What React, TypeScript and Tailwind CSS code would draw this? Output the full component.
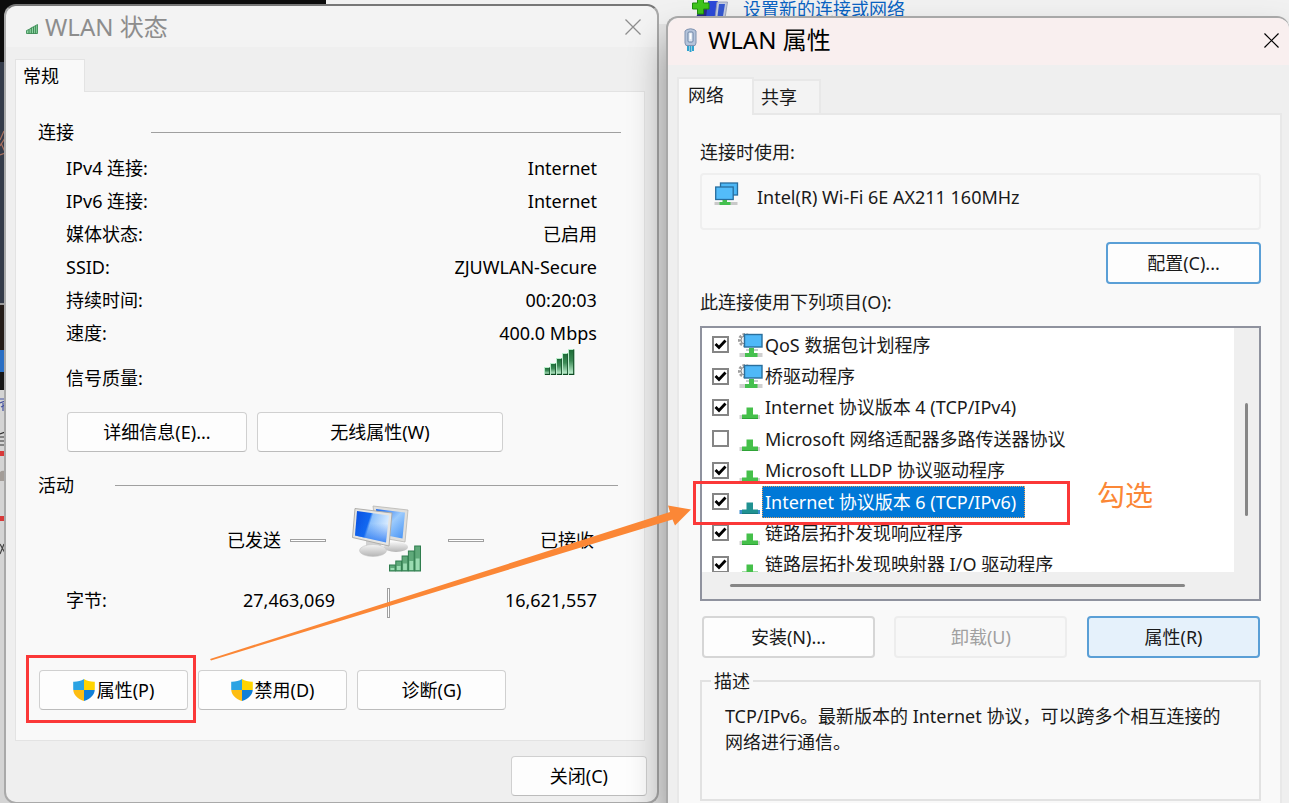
import React from "react";

function CloseIcon({ className }: { className: string }) {
  return (
    <svg viewBox="0 0 16 16" className={className} fill="none" stroke="currentColor" strokeWidth="1.3" aria-hidden="true">
      <path d="M0.5 0.5 L15.5 15.5 M15.5 0.5 L0.5 15.5" />
    </svg>
  );
}

function SignalBars({ className }: { className: string }) {
  const bars = [
    { x: 0.5, h: 7 },
    { x: 6.5, h: 11 },
    { x: 12.5, h: 16 },
    { x: 18.5, h: 21 },
    { x: 24.5, h: 25 },
  ];
  return (
    <svg viewBox="0 0 31 26" className={className} aria-hidden="true">
      <defs>
        <linearGradient id="barFill" x1="0" y1="0" x2="0" y2="1">
          <stop offset="0" stopColor="#1c6b36" />
          <stop offset="0.45" stopColor="#3b8a55" />
          <stop offset="1" stopColor="#c9f7d9" />
        </linearGradient>
      </defs>
      {bars.map((b) => (
        <g key={b.x}>
          <rect x={b.x} y={25.5 - b.h} width="5.4" height={b.h} fill="url(#barFill)" stroke="#b9ecca" strokeWidth="1" />
          <path d={`M${b.x + 5.2} ${25.5 - b.h} V25.4 H${b.x + 0.5}`} fill="none" stroke="#0d4a22" strokeWidth="1.1" />
        </g>
      ))}
    </svg>
  );
}

function TinySignal() {
  return (
    <svg viewBox="0 0 12 10" className="h-[10px] w-3" aria-hidden="true">
      <path d="M0.5 9.5 V6.5 L3 5.5 L5 4 L8 2.5 L11.5 0.5 V9.5 Z" fill="#8fd6a4" stroke="#3e8d57" strokeWidth="0.9" />
      <path d="M3 5.5 V9.5 M5.3 4 V9.5 M7.6 3 V9.5 M9.7 1.8 V9.5" stroke="#2c7a45" strokeWidth="0.9" />
    </svg>
  );
}

function ShieldIcon() {
  return (
    <svg viewBox="0 0 22 22" className="h-[22px] w-[22px]" aria-hidden="true">
      <defs>
        <clipPath id="shieldShape">
          <path d="M11 0 C8.2 1.8 4 3 0.2 2.8 V10 C0.2 16 5 20 11 22 C17 20 21.8 16 21.8 10 V2.8 C18 3 13.8 1.8 11 0 Z" />
        </clipPath>
      </defs>
      <g clipPath="url(#shieldShape)">
        <rect width="11" height="11" fill="#2ba3e3" />
        <rect x="11" width="11" height="11" fill="#ffd400" />
        <rect y="11" width="11" height="11" fill="#fdbd12" />
        <rect x="11" y="11" width="11" height="11" fill="#0f7fd8" />
      </g>
    </svg>
  );
}

function TwinMonitors() {
  return (
    <svg viewBox="0 0 70 68" className="h-[68px] w-[70px]" aria-hidden="true">
      <defs>
        <linearGradient id="screenA" x1="0" y1="0" x2="1" y2="0.3">
          <stop offset="0" stopColor="#0a4fe0" />
          <stop offset="0.45" stopColor="#1268f0" />
          <stop offset="0.52" stopColor="#8cc0fb" />
          <stop offset="1" stopColor="#d8ebff" />
        </linearGradient>
        <linearGradient id="screenDepth" x1="0" y1="0" x2="0" y2="1">
          <stop offset="0.4" stopColor="#1268f0" stopOpacity="0" />
          <stop offset="1" stopColor="#1268f0" stopOpacity="0.75" />
        </linearGradient>
        <linearGradient id="screenB" x1="0" y1="0" x2="1" y2="1">
          <stop offset="0" stopColor="#1464ee" />
          <stop offset="0.5" stopColor="#9dcbfc" />
          <stop offset="1" stopColor="#4391f5" />
        </linearGradient>
        <linearGradient id="stand" x1="0" y1="0" x2="0" y2="1">
          <stop offset="0" stopColor="#f4f4f4" />
          <stop offset="1" stopColor="#b5b5b5" />
        </linearGradient>
      </defs>
      <ellipse cx="44" cy="43" rx="12" ry="5" fill="url(#stand)" />
      <path d="M21 2 L56 6 L53 38 L25 33 Z" fill="#e0dfdc" stroke="#b7b6b3" strokeWidth="0.8" />
      <path d="M24 5 L53 8.500 L50.500 34.500 L27 30 Z" fill="url(#screenB)" />
      <path d="M14 36 L29 38 L29 46 L14 46 Z" fill="#d2d2d2" />
      <ellipse cx="21" cy="46.500" rx="13.500" ry="6" fill="url(#stand)" stroke="#c6c6c6" strokeWidth="0.6" />
      <path d="M3 4.500 L40 9 L37 42 L0.500 33.500 Z" fill="#e6e5e2" stroke="#a9a8a5" strokeWidth="0.9" />
      <path d="M5 7 L37 11.500 L34 38.500 L3 31.500 Z" fill="url(#screenA)" />
      <path d="M5 7 L37 11.500 L34 38.500 L3 31.500 Z" fill="url(#screenDepth)" />
      <g transform="translate(37 41)">
        {[
          { x: 0.5, h: 6 },
          { x: 6.8, h: 10 },
          { x: 13.1, h: 15 },
          { x: 19.4, h: 20 },
          { x: 25.7, h: 25 },
        ].map((b) => (
          <g key={b.x}>
            <rect x={b.x} y={26 - b.h} width="5.800" height={b.h} fill="#5fa97a" stroke="#2f7d4e" strokeWidth="1" />
            <rect x={b.x + 1} y={26 - b.h / 2} width="3.800" height={b.h / 2 - 1} fill="#9bdcb2" />
          </g>
        ))}
      </g>
    </svg>
  );
}

function AdapterIcon() {
  return (
    <svg viewBox="0 0 13 25" className="h-[25px] w-[13px]" aria-hidden="true">
      <path d="M4 16 V23 M6.500 16 V24 M9 16 V23" stroke="#2fa3cf" strokeWidth="2" />
      <path d="M3 1.500 Q6.500 0 10 1.500 L12 3 V15 L11 17.500 H2 L1 15 V3 Z" fill="#b4c3da" stroke="#7f92b0" strokeWidth="1" />
      <rect x="4" y="4" width="5" height="10" rx="1" fill="#dfe7f2" stroke="#6c84a6" strokeWidth="1" />
      <path d="M6.500 5.500 V11" stroke="#ffffff" strokeWidth="1.500" />
    </svg>
  );
}

function NetworkDevice() {
  return (
    <svg viewBox="0 0 25 24" className="h-6 w-[25px]" aria-hidden="true">
      <rect x="6.500" y="1" width="17" height="12" fill="#4db7f5" stroke="#276d9e" strokeWidth="1.300" />
      <rect x="1.700" y="5" width="17.500" height="12.500" fill="#53bcfa" stroke="#276d9e" strokeWidth="1.300" />
      <rect x="0.5" y="20" width="23" height="3" fill="#c9c9c9" />
      <path d="M8.500 18 H13 V20 H16.500 V23 H5.500 V20 H8.500 Z" fill="#44c04f" />
    </svg>
  );
}

function ServiceIcon() {
  return (
    <svg viewBox="0 0 25 26" className="h-[26px] w-[25px]" aria-hidden="true">
      <circle cx="7" cy="8" r="5.500" fill="none" stroke="#9b9b9b" strokeWidth="3" strokeDasharray="2.400 1.400" />
      <circle cx="7" cy="8" r="4" fill="#f4f4f4" stroke="#8d8d8d" strokeWidth="1" />
      <rect x="6.500" y="2.500" width="17.500" height="12.500" fill="#4fb8f8" stroke="#2a6f9d" strokeWidth="1.400" />
      <path d="M8 18 H20" stroke="#8f9aa0" strokeWidth="1" />
      <rect x="1.500" y="21" width="23" height="4" fill="#cfcfcf" />
      <path d="M11 16 H16 V21 H19.500 V25 H7 V21 H11 Z" fill="#45c04f" />
    </svg>
  );
}

function ProtocolIcon({ selected }: { selected?: boolean }) {
  return (
    <svg viewBox="0 0 25 26" className="h-[26px] w-[25px]" aria-hidden="true">
      <rect x="1.500" y="21" width="20.500" height="4" fill={selected ? "#3f8fd0" : "#d2d2d2"} />
      <path d="M8.500 13.500 H15 V20.500 H20 V25 H4 V20.500 H8.500 Z" fill={selected ? "#219291" : "#45c04a"} />
      <path d="M4 24.500 H20" stroke={selected ? "#187a80" : "#2fa337"} strokeWidth="1" />
    </svg>
  );
}

function WizardIcon() {
  return (
    <svg viewBox="0 0 36 18" className="h-[18px] w-9" aria-hidden="true">
      <path d="M6 12 L22 1 L22 18 H4 Z" fill="#2a2a8a" />
      <path d="M16 1 H26 L24 18 H14 Z" fill="#2c49d8" />
      <path d="M25 2 H35.500 L33 18 H23 Z" fill="#c3cbe0" stroke="#9098b0" strokeWidth="0.8" />
      <path d="M27 4 H33 L31 16 H25.500 Z" fill="#3658cf" />
      <path d="M5.500 -2 H11.500 V3 H17 V9 H11.500 V14 H5.500 V9 H0.5 V3 H5.500 Z" fill="#3fc51b" stroke="#1f8f0c" strokeWidth="1" />
    </svg>
  );
}

const buttonBase = "flex items-center justify-center rounded border text-lg leading-6";
const plainButton = `${buttonBase} h-10 border-[#d0d0d0] border-b-[#bcbcbc] bg-[#fdfdfd]`;

const statusRows = [
  ["IPv4 连接:", "Internet"],
  ["IPv6 连接:", "Internet"],
  ["媒体状态:", "已启用"],
  ["SSID:", "ZJUWLAN-Secure"],
  ["持续时间:", "00:20:03"],
  ["速度:", "400.0 Mbps"],
];

function SectionTitle({ title, gap, end }: { title: string; gap: string; end: string }) {
  return (
    <div className={`flex h-6 items-center pl-[22px] ${gap} ${end}`}>
      <h2 className="text-lg leading-6">{title}</h2>
      <div className="h-px flex-1 bg-[#a0a0a0]" />
    </div>
  );
}

function StatusWindow() {
  return (
    <section aria-label="WLAN 状态" className="mt-1 flex min-w-0 flex-[654] flex-col rounded-xl border-2 border-[#a9a9a9] border-t-[#777777] bg-[#efefef] text-black">
      <header className="flex h-[41px] items-center rounded-t-xl bg-[#f3f3f3] pr-4 pl-5 text-[#8d8d8d]">
        <div className="pt-1">
          <TinySignal />
        </div>
        <h1 className="flex-1 pl-[7px] text-2xl leading-8">WLAN 状态</h1>
        <button type="button" aria-label="关闭">
          <CloseIcon className="h-4 w-4" />
        </button>
      </header>

      <div className="flex flex-1 flex-col pt-3 pr-3 pb-1.5 pl-[9px]">
        <div role="tablist" className="flex">
          <button type="button" role="tab" aria-selected="true" className="relative z-10 -mb-px h-[33px] w-[70px] border border-b-0 border-[#e3e3e3] bg-[#f9f9f9] pl-[7px] text-left text-lg leading-6">
            常规
          </button>
        </div>
        <div role="tabpanel" className="border border-[#e3e3e3] bg-[#f9f9f9] pt-7 pb-[30px]">
          <SectionTitle title="连接" gap="gap-[77px]" end="pr-[23px]" />
          <dl className="pt-[7px] pr-[47px] pl-[50px] text-lg">
            {statusRows.map(([label, value]) => (
              <div key={label} className="flex h-[33px] items-center justify-between leading-6">
                <dt>{label}</dt>
                <dd>{value}</dd>
              </div>
            ))}
            <div className="flex h-[63px] items-start justify-between leading-6">
              <dt className="pt-[17px]">信号质量:</dt>
              <dd className="pr-[22px]">
                <SignalBars className="h-[26px] w-[31px]" />
              </dd>
            </div>
          </dl>
          <div className="flex gap-[10px] pl-[51px]">
            <button type="button" className={`${plainButton} w-[180px]`}>详细信息(E)...</button>
            <button type="button" className={`${plainButton} w-[246px]`}>无线属性(W)</button>
          </div>

          <div className="pt-[21px]">
            <SectionTitle title="活动" gap="gap-[41px]" end="pr-[26px]" />
          </div>
          <div className="grid grid-cols-[161px_108px_107px_1fr] pt-[7px] pr-[47px] pl-[50px] text-lg leading-6">
            <div className="col-start-2 flex h-[68px] items-center gap-[9px] pt-1">
              <span className="whitespace-nowrap">已发送</span>
              <span className="h-[3px] w-9 border border-[#a0a0a0] bg-white" />
            </div>
            <div className="flex h-[68px] items-center pl-[17px]">
              <TwinMonitors />
            </div>
            <div className="flex h-[68px] items-center justify-between pt-1 pr-[3px] pl-1.5">
              <span className="h-[3px] w-9 border border-[#a0a0a0] bg-white" />
              <span>已接收</span>
            </div>
          </div>
          <div className="grid grid-cols-[161px_108px_107px_1fr] pt-4 pr-[47px] pl-[50px] text-lg leading-6">
            <span>字节:</span>
            <span className="text-right">27,463,069</span>
            <span className="mx-auto h-[30px] w-[3px] border border-[#a0a0a0] bg-white" />
            <span className="text-right">16,621,557</span>
          </div>

          <div className="flex gap-[10px] pt-[52px] pl-[23px]">
            <button type="button" className={`${plainButton} relative w-[149px]`}>
              <ShieldIcon />
              <span className="pl-0.5">属性(P)</span>
              <span aria-hidden="true" className="pointer-events-none absolute -top-4 -right-[9px] -bottom-[14px] -left-[14px] border-3 border-[#fb3838]" />
            </button>
            <button type="button" className={`${plainButton} w-[149px]`}>
              <ShieldIcon />
              <span className="pl-0.5">禁用(D)</span>
            </button>
            <button type="button" className={`${plainButton} w-[149px]`}>诊断(G)</button>
          </div>
        </div>
        <div className="mt-auto flex justify-end">
          <button type="button" className={`${plainButton} -mr-[2px] w-[136px]`}>关闭(C)</button>
        </div>
      </div>
    </section>
  );
}

type Item = { name: string; checked: boolean; kind: "service" | "protocol"; selected?: boolean };

const items: Item[] = [
  { name: "QoS 数据包计划程序", checked: true, kind: "service" },
  { name: "桥驱动程序", checked: true, kind: "service" },
  { name: "Internet 协议版本 4 (TCP/IPv4)", checked: true, kind: "protocol" },
  { name: "Microsoft 网络适配器多路传送器协议", checked: false, kind: "protocol" },
  { name: "Microsoft LLDP 协议驱动程序", checked: true, kind: "protocol" },
  { name: "Internet 协议版本 6 (TCP/IPv6)", checked: true, kind: "protocol", selected: true },
  { name: "链路层拓扑发现响应程序", checked: true, kind: "protocol" },
  { name: "链路层拓扑发现映射器 I/O 驱动程序", checked: true, kind: "protocol" },
];

function ItemRow({ item }: { item: Item }) {
  return (
    <li className={item.selected ? "relative z-10" : ""}>
      <label className="flex h-full items-center pl-2.5">
        <span className="grid h-[17px] w-[17px] shrink-0 place-items-center">
          <input type="checkbox" defaultChecked={item.checked} className="peer col-start-1 row-start-1 h-[17px] w-[17px] appearance-none border-2 border-[#858585] bg-white" />
          <svg viewBox="0 0 17 17" className="pointer-events-none invisible col-start-1 row-start-1 h-[17px] w-[17px] peer-checked:visible" aria-hidden="true">
            <path d="M3.500 8 L7 11.500 L13.500 4.500" fill="none" stroke="#000000" strokeWidth="2.800" />
          </svg>
        </span>
        <span className="shrink-0 pl-[9px]">
          {item.kind === "service" ? <ServiceIcon /> : <ProtocolIcon selected={item.selected} />}
        </span>
        <span
          className={
            item.selected
              ? "-ml-px border border-dotted border-[#e8a05c] bg-[#0078d7] py-[3px] pr-2 pl-[2px] text-lg leading-6 whitespace-nowrap text-white"
              : "pl-0.5 text-lg leading-6 whitespace-nowrap"
          }
        >
          {item.name}
        </span>
      </label>
      {item.selected && (
        <span aria-hidden="true" className="pointer-events-none absolute -top-[5px] -left-[9px] h-11 w-[377px] border-3 border-[#fb3838]" />
      )}
    </li>
  );
}

function PropertiesWindow() {
  return (
    <section aria-label="WLAN 属性" className="relative z-10 mt-4 flex min-w-0 flex-[624] flex-col rounded-t-xl border-t-2 border-l-2 border-[#a8a8a8] bg-[#efefef] text-[#1a1a1a] shadow-[0_24px_36px_rgba(0,0,0,0.38)]">
      <header className="flex h-[47px] items-center rounded-t-xl bg-[#f9efef] pr-[10px] pb-[3px] pl-4 text-black">
        <AdapterIcon />
        <h1 className="flex-1 pl-[11px] text-2xl leading-8">WLAN 属性</h1>
        <button type="button" aria-label="关闭">
          <CloseIcon className="h-[15px] w-[15px]" />
        </button>
      </header>

      <div className="flex flex-1 flex-col pt-3 pr-[7px] pl-[9px]">
        <div role="tablist" className="flex items-end">
          <button type="button" role="tab" aria-selected="true" className="relative z-10 -mb-[2px] h-[38px] w-[77px] border-2 border-b-0 border-[#e8e8e8] bg-[#f9f9f9] pb-1 pl-[9px] text-left text-lg leading-6">
            网络
          </button>
          <button type="button" role="tab" aria-selected="false" className="h-[34px] w-[67px] border-2 border-b-0 border-l-0 border-[#e8e8e8] bg-[#f3f3f3] pl-[7px] text-left text-lg leading-6">
            共享
          </button>
        </div>
        <div role="tabpanel" className="flex-1 border-2 border-b-0 border-[#e8e8e8] bg-[#f9f9f9] pt-[25px] pr-[19px] pb-[3px] pl-[21px]">
          <p className="text-lg leading-6">连接时使用:</p>
          <div className="mt-[9px] flex h-[57px] items-start gap-[18px] rounded-sm border-2 border-[#efefef] pt-[7px] pl-3">
            <NetworkDevice />
            <span className="pt-[3px] text-lg leading-6">Intel(R) Wi-Fi 6E AX211 160MHz</span>
          </div>
          <div className="flex justify-end pt-3">
            <button type="button" className={`${buttonBase} h-[42px] w-[155px] border-2 border-[#5a9fd6] bg-[#fdfdfd]`}>配置(C)...</button>
          </div>

          <p className="pt-1.5 text-lg leading-6">此连接使用下列项目(O):</p>
          <div className="mt-3 grid h-[275px] grid-cols-[1fr_25px] grid-rows-[1fr_27px] border-2 border-[#8f929e] bg-[#efefef]">
            <div className="relative min-h-0 min-w-0">
              <div className="h-full [clip-path:inset(0_0_0_-12px)]">
                <ul className="grid h-[252px] grid-rows-8 bg-white pt-px">
                  {items.map((item) => (
                    <ItemRow key={item.name} item={item} />
                  ))}
                </ul>
              </div>
              <span className="pointer-events-none absolute top-[147px] right-[81px] text-[28px] leading-10 text-[#fb8736]">勾选</span>
            </div>
            <div className="flex justify-center pt-[75px]">
              <div className="h-[113px] w-[3px] rounded-full bg-[#868686]" />
            </div>
            <div className="pt-3 pr-[49px] pl-7">
              <div className="h-[3px] rounded-full bg-[#868686]" />
            </div>
          </div>

          <div className="flex justify-between pt-[15px] pr-px pl-0.5">
            <button type="button" className={`${buttonBase} h-[42px] w-[173px] border-2 border-[#d6d6d6] bg-[#fdfdfd]`}>安装(N)...</button>
            <button type="button" disabled className={`${buttonBase} h-[42px] w-[173px] border-2 border-[#ededed] bg-[#f8f8f8] text-[#a0a0a0]`}>卸载(U)</button>
            <button type="button" className={`${buttonBase} h-[42px] w-[173px] border-2 border-[#5a9fd6] bg-[#e5f1fb]`}>属性(R)</button>
          </div>

          <fieldset className="mt-[11px] h-[132px] border-2 border-[#e2e2e2] pt-2.5 pr-[30px] pl-[23px]">
            <legend className="-ml-[14px] px-[3px] text-lg leading-6">描述</legend>
            <p className="text-lg leading-[26px]">TCP/IPv6。最新版本的 Internet 协议，可以跨多个相互连接的网络进行通信。</p>
          </fieldset>
        </div>
      </div>
    </section>
  );
}

function Backdrop() {
  return (
    <div aria-hidden="true" className="absolute inset-0 flex flex-col">
      <div className="flex h-6 shrink-0">
        <div className="w-[326px] bg-[#0c0c0c]" />
        <div className="flex-1 bg-[#f1f1f1]" />
      </div>
      <div className="flex flex-1">
        <div className="flex w-6 flex-col">
          <div className="h-[38px] bg-[#0c0c0c]" />
          <div className="flex h-[241px] flex-col bg-[#343b49]">
            <svg viewBox="0 0 5 26" className="mt-[68px] h-[26px] w-[5px]">
              <path d="M0 10 L4 1 M0 16 L5 8 M1 13 L5 22 M0 25 L5 23" fill="none" stroke="#a8705f" strokeWidth="1.200" />
            </svg>
          </div>
          <div className="h-[2px] bg-[#9a9a9a]" />
          <div className="h-[45px] bg-[#241c18]" />
          <div className="h-[22px] bg-[#2a6fc4]" />
          <div className="h-[18px] bg-[#171717]" />
          <div className="flex-1 bg-[#d4d4d4]">
            <svg viewBox="0 0 5 200" className="h-[200px] w-[5px]">
              <path d="M0 9 H5 M0 13 L5 11 M3 13 V21 M1 17 L5 15" stroke="#4552a0" strokeWidth="1.200" fill="none" />
              <path d="M0 44 L5 42 M0 47 H5 M0 51 H5 M0 55 H5" stroke="#333333" strokeWidth="1.200" fill="none" />
              <path d="M0 63.500 H5 M0 128.500 H5" stroke="#d83a3a" strokeWidth="5" />
              <path d="M0 91 V82 Q2 80 5 81 V91 Z" fill="#a39d98" />
              <path d="M0 154 L5 163 M4 154 L0 164" stroke="#444444" strokeWidth="1.200" />
            </svg>
          </div>
        </div>
        <div className="flex-1 bg-[#e4e4e4]" />
      </div>
    </div>
  );
}

export default function App() {
  return (
    <main
      className="relative flex min-h-screen flex-col overflow-hidden bg-[#e4e4e4]"
      style={{ fontFamily: '"Noto Sans", "Noto Sans CJK SC", sans-serif' }}
    >
      <Backdrop />
      <a href="#new-connection" className="absolute top-0 left-[692px] flex h-[18px] items-center gap-[15px] text-lg leading-[18px] whitespace-nowrap text-[#0a63c2]">
        <WizardIcon />
        设置新的连接或网络
      </a>
      <div className="relative flex flex-1 gap-[7px] pl-1">
        <StatusWindow />
        <PropertiesWindow />
      </div>
      <svg viewBox="0 0 482 156" className="pointer-events-none absolute top-[505px] left-[210px] z-20 h-[156px] w-[482px]" aria-hidden="true">
        <path d="M0 154 L460 7 L458 0.5 L481 4.500 L465 20.500 L462.500 14.500 L1 155.500 Z" fill="#fb8736" />
      </svg>
    </main>
  );
}
